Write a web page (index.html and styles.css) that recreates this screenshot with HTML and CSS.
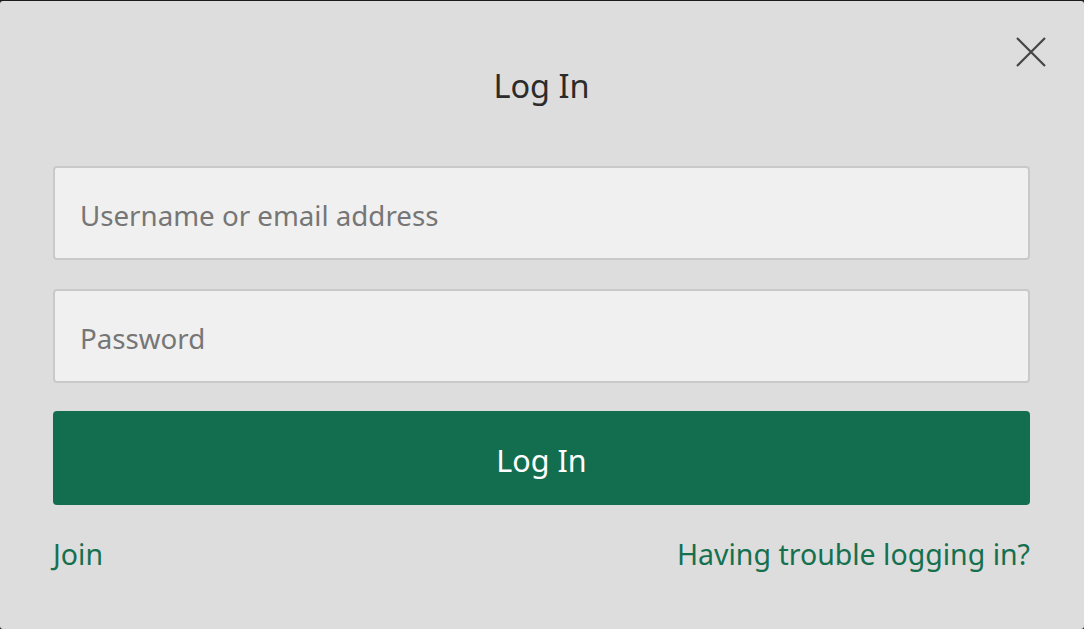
FILE: index.html
```html
<!DOCTYPE html>
<html lang="en">
<head>
<meta charset="utf-8">
<title>Log In</title>
<link rel="stylesheet" href="styles.css">
</head>
<body>
<div class="dialog">
  <button class="close" aria-label="Close">
    <svg width="32" height="32" viewBox="0 0 32 32"><path d="M2 2 L30 30 M30 2 L2 30" stroke="#444" stroke-width="2.2" fill="none"/></svg>
  </button>
  <h1 class="title">Log In</h1>
  <form class="form">
    <input class="field field-first" type="text" placeholder="Username or email address">
    <input class="field field-second" type="password" placeholder="Password">
    <button class="submit" type="button">Log In</button>
  </form>
  <div class="links">
    <a class="link" href="#">Join</a>
    <a class="link" href="#">Having trouble logging in?</a>
  </div>
</div>
</body>
</html>
```
FILE: styles.css
```css
html, body {
  margin: 0;
  padding: 0;
  height: 100%;
}
body {
  background: #1c1c1c;
  padding-top: 1px;
  box-sizing: border-box;
  font-family: "Noto Sans", "Open Sans", sans-serif;
  overflow: hidden;
}
.dialog {
  position: relative;
  height: 628px;
  background: #dddddd;
  border-radius: 3px;
  padding: 0 54px 0 53px;
  box-sizing: border-box;
  display: flex;
  flex-direction: column;
}
.close {
  position: absolute;
  top: 35px;
  right: 37px;
  width: 32px;
  height: 32px;
  padding: 0;
  border: 0;
  background: transparent;
  display: flex;
}
.title {
  margin: 63px 0 58px;
  font-size: 32.5px;
  line-height: 44px;
  font-weight: 400;
  color: #2b2b2b;
  text-align: center;
}
.form {
  display: flex;
  flex-direction: column;
}
.field {
  height: 94px;
  box-sizing: border-box;
  border: 2px solid #c9c9c9;
  border-radius: 4px;
  background: #f0f0f0;
  padding: 4px 25px 0;
  font-family: inherit;
  font-size: 27.7px;
  color: #333;
  outline: none;
}
.field::placeholder {
  color: #767676;
}
.field-second {
  margin-top: 29px;
}
.submit {
  margin-top: 28px;
  height: 94px;
  border: 0;
  border-radius: 4px;
  background: #136e50;
  color: #ffffff;
  font-family: inherit;
  font-size: 30.5px;
  padding: 4px 0 0;
}
.links {
  margin-top: 29px;
  display: flex;
  justify-content: space-between;
  line-height: 40px;
}
.link {
  color: #15704f;
  text-decoration: none;
  font-size: 28.5px;
}
```
